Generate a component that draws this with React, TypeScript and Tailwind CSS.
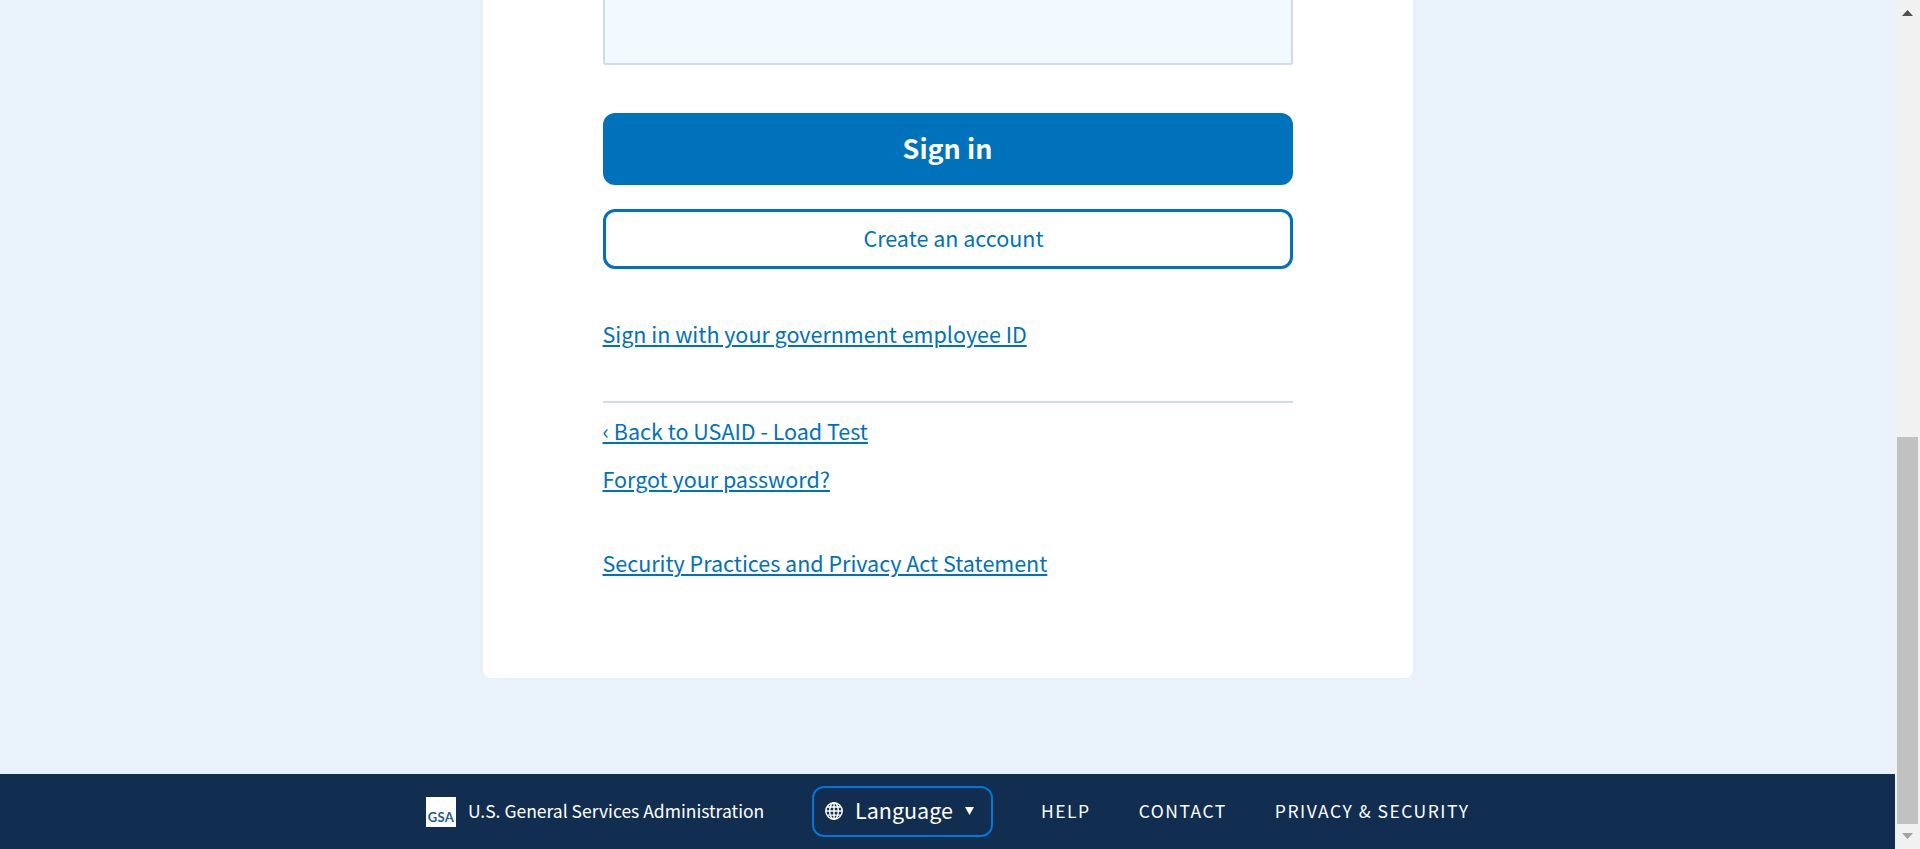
import React from "react";

const FOOTER_LINKS = ["HELP", "CONTACT", "PRIVACY & SECURITY"];

function TextLink({ children, className = "" }: { children: React.ReactNode; className?: string }) {
  return (
    <a href="#" className={"block h-9 w-fit leading-[33px] underline decoration-2 underline-offset-2 " + className}>
      {children}
    </a>
  );
}

function Globe() {
  return (
    <svg viewBox="0 0 18 18" className="size-[18px] shrink-0" fill="none" stroke="#fff" strokeWidth="1.45">
      <circle cx="9" cy="9" r="8.2" />
      <ellipse cx="9" cy="9" rx="4.3" ry="8.2" />
      <path d="M9 .8v16.4M.8 9h16.4M2 4.9h14M2 13.1h14" />
    </svg>
  );
}

function GsaLogo() {
  return (
    <span className="relative flex size-[30px] shrink-0 items-end justify-center bg-white pb-[2px] font-[Lato] text-[13px] font-bold leading-4 tracking-[0.3px] text-[#1f5c8b]">
      GSA
      <svg viewBox="0 0 10 10" className="absolute bottom-[4px] right-[4px] size-[5px]" fill="#fff">
        <path d="M5 0l1.3 3.6H10L7 5.9 8.1 10 5 7.6 1.9 10 3 5.9 0 3.6h3.7z" />
      </svg>
    </span>
  );
}

function Scrollbar() {
  return (
    <div className="flex h-full w-[25px] shrink-0 flex-col items-center bg-[#f1f1f1]">
      <svg viewBox="0 0 11 6" className="mt-[10px] h-1.5 w-[11px]" fill="#505050">
        <path d="M5.5 0L11 6H0z" />
      </svg>
      <div className="mt-[421px] h-[387px] w-[21px] bg-[#c1c1c1]" />
      <svg viewBox="0 0 11 6" className="mt-[9px] h-1.5 w-[11px]" fill="#a3a3a3">
        <path d="M0 0h11L5.5 6z" />
      </svg>
    </div>
  );
}

export default function App() {
  return (
    <div className="flex h-[849px] w-[1920px] overflow-hidden font-['Noto_Sans_CJK_SC','Noto_Sans',sans-serif]">
      <div className="flex w-[1895px] flex-col bg-[#e9f2fa]">
        <main className="flex h-[774px] justify-center">
          <section className="h-[678px] w-[930px] rounded-b-lg bg-white px-[120px] text-[21.5px] text-[#0071bb]">
            <div className="h-[65px] rounded-b-[3px] border-2 border-t-0 border-[#cfdced] bg-[#f2f9ff]" />
            <button className="mt-12 flex h-[72px] w-full items-center justify-center rounded-xl bg-[#0071bb] pb-[2px] text-[26.9px] font-bold text-white">
              Sign in
            </button>
            <button className="mt-6 flex h-[60px] w-full items-center justify-center rounded-xl border-[3px] border-[#0071bb] pb-[2px] pl-3">
              Create an account
            </button>
            <TextLink className="mt-12">Sign in with your government employee ID</TextLink>
            <hr className="mt-12 border-t-2 border-[#cfdced]" />
            <TextLink className="mt-[11px]">‹ Back to USAID - Load Test</TextLink>
            <TextLink className="mt-3">Forgot your password?</TextLink>
            <TextLink className="mt-12">Security Practices and Privacy Act Statement</TextLink>
          </section>
        </main>
        <footer className="flex h-[75px] items-center bg-[#112e51] pl-[426px] text-white">
          <GsaLogo />
          <span className="ml-3 w-[296px] whitespace-nowrap pb-px text-[17.5px]">
            U.S. General Services Administration
          </span>
          <button className="ml-12 flex h-[51px] w-[181px] items-center rounded-xl border-2 border-[#0076d6] pb-px pl-[11px] text-[21.5px]">
            <Globe />
            <span className="ml-3 w-[98px] pb-px text-left">Language</span>
            <svg viewBox="0 0 9 8" className="ml-3 h-2 w-[9px]" fill="#fff">
              <path d="M0 0h9L4.5 8z" />
            </svg>
          </button>
          <nav className="ml-12 flex gap-12 pb-px text-[17.5px] tracking-[1.5px]">
            {FOOTER_LINKS.map((label) => (
              <a href="#" key={label} className="whitespace-nowrap">
                {label}
              </a>
            ))}
          </nav>
        </footer>
      </div>
      <Scrollbar />
    </div>
  );
}
